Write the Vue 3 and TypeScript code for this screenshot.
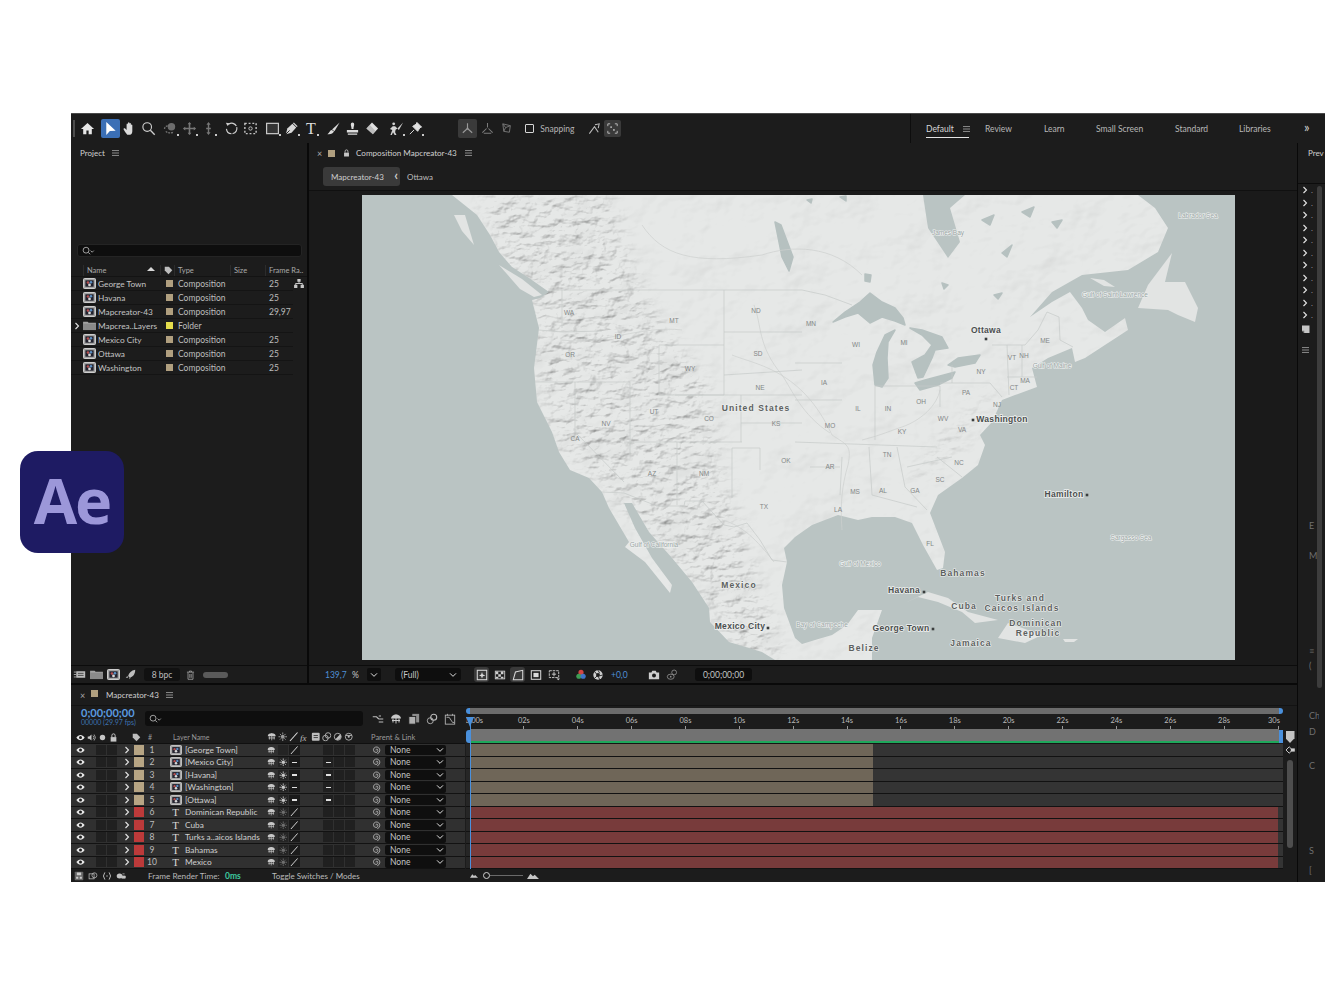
<script setup lang="ts">
interface Tool { icon: string; tri?: boolean; dim?: boolean; on?: boolean; sel?: boolean }
const toolGroups: Tool[][] = [
  [{ icon: 'home' }],
  [{ icon: 'arrow', sel: true }, { icon: 'hand' }, { icon: 'zoom' }],
  [{ icon: 'orbit', dim: true, tri: true }, { icon: 'pan', dim: true, tri: true }, { icon: 'dolly', dim: true, tri: true }],
  [{ icon: 'rotate' }, { icon: 'anchor' }],
  [{ icon: 'rect', tri: true }, { icon: 'pen', tri: true }, { icon: 'T', tri: true }],
  [{ icon: 'brush' }, { icon: 'stamp' }, { icon: 'eraser' }],
  [{ icon: 'roto', tri: true }, { icon: 'pin', tri: true }],
]
const workspaces = ['Review', 'Learn', 'Small Screen', 'Standard', 'Libraries']
const projectRows = [
  { name: 'George Town', type: 'Composition', fps: '25', tree: true },
  { name: 'Havana', type: 'Composition', fps: '25' },
  { name: 'Mapcreator-43', type: 'Composition', fps: '29,97' },
  { name: 'Mapcrea..Layers', type: 'Folder', fps: '', folder: true },
  { name: 'Mexico City', type: 'Composition', fps: '25' },
  { name: 'Ottawa', type: 'Composition', fps: '25' },
  { name: 'Washington', type: 'Composition', fps: '25' },
]
const layers = [
  { n: 1, name: '[George Town]', kind: 'comp', first: true },
  { n: 2, name: '[Mexico City]', kind: 'comp' },
  { n: 3, name: '[Havana]', kind: 'comp' },
  { n: 4, name: '[Washington]', kind: 'comp' },
  { n: 5, name: '[Ottawa]', kind: 'comp' },
  { n: 6, name: 'Dominican Republic', kind: 'text' },
  { n: 7, name: 'Cuba', kind: 'text' },
  { n: 8, name: 'Turks a..aicos Islands', kind: 'text' },
  { n: 9, name: 'Bahamas', kind: 'text' },
  { n: 10, name: 'Mexico', kind: 'text' },
]
const ticks = ['0:00s', '02s', '04s', '06s', '08s', '10s', '12s', '14s', '16s', '18s', '20s', '22s', '24s', '26s', '28s', '30s']
const headSwitches = ['shy', 'sun', 'slash', 'fx', 'mb', 'blend', 'half', 'cube']
const stripLetters = [
  { t: 'E', gap: 168 }, { t: 'M', gap: 21 }, { t: '≡', gap: 86 }, { t: '(', gap: 6 },
  { t: 'Ch', gap: 41 }, { t: 'D', gap: 7 }, { t: 'C', gap: 25 }, { t: 'S', gap: 76 }, { t: '[', gap: 10 },
]

const land = 'M90 0L115 20L128 40L137 57L150 72L167 83L187 97L178 103L170 105L177 133L172 173L175 207L190 237L197 257L208 275L227 283L240 297L247 313L267 347L263 352L283 367L308 398L310 390L290 363L273 333L262 308L270 308L287 337L310 363L330 387L347 413L348 427L367 447L400 457L413 465L510 465L510 443L520 415L496 415L485 430L470 440L453 445L440 449L433 443L422 413L420 390L425 367L422 353L433 342L450 330L476 320L496 325L510 322L533 322L550 328L561 350L575 375L581 373L583 357L568 318L576 300L600 283L616 270L623 250L618 240L630 227L640 205L653 200L675 192L670 173L686 163L710 153L713 167L723 163L766 135L763 123L743 137L726 125L720 113L708 97L690 107L668 122L690 97L720 80L766 75L796 57L806 33L793 13L776 0Z'
const islands = [
  '810 58 786 90 776 113 806 115 816 120 833 127 836 113 823 87 803 87',
  '543 408 566 397 586 403 606 417 636 425 613 428 600 417 576 407 556 402',
  '636 443 646 428 680 440 663 448',
  '701 444 716 444 712 447 703 447',
  '728 83 742 85 753 92 742 91',
  '137 70 160 84 180 100 172 102 158 94',
  '92 20 103 20 112 50 100 36',
  '600 445 612 446 606 449',
]
const lakes = [
  '471 127 483 117 498 107 508 98 520 107 533 113 541 123 543 130 533 126 520 122 508 128 496 118 483 122',
  '511 170 515 157 523 140 533 135 526 147 525 163 526 183 520 192 513 190',
  '548 133 560 135 580 142 586 153 573 155 570 163 561 182 556 183 550 167 563 160 570 150 560 140',
  '553 188 563 185 593 177 590 183 576 190 558 195',
  '586 170 596 163 618 160 613 168 593 172',
  '413 27 419 30 431 62 427 76 420 62',
  '503 79 509 80 508 87 503 86',
  '445 5 450 4 449 8', '478 2 484 1 484 6', '660 17 672 12 668 22', '690 27 700 25 695 33',
  '620 25 632 20 628 30', '640 58 650 50 645 62', '580 88 586 90 582 94', '632 100 640 98 636 104',
]
const borders = [
  'M187 95L440 95L463 100L490 110',
  'M630 150L663 150L676 135L685 117L697 122L698 145L711 152',
  'M200 95L200 133M177 135L200 137L240 136',
  'M173 187L268 187L268 260M213 187L213 237L262 287',
  'M262 247L380 247M315 247L315 310',
  'M370 253L370 303M370 253L398 253L398 275',
  'M240 297L262 298L295 311L322 311L323 306L340 306L362 330L372 332L385 328L398 345L410 365L425 367',
  'M297 150L362 150L362 200L297 200L297 150M313 200L379 200L379 247',
  'M362 95L362 150M362 137L440 137M362 180L440 175M379 200L440 200M379 228L440 228',
  'M433 168L480 168M433 205L480 205M433 247L575 252M513 191L513 245M513 191L578 191L578 212M578 188L628 188M590 188L590 170',
  'M507 252L510 300M480 262L478 300M448 272L478 272M535 252L543 292L565 315M510 300L555 312M575 262L600 282M545 272L590 262',
  'M645 150L647 200M660 150L660 182M645 182L675 182M628 188L640 202',
]
const rivers = [
  'M470 240C485 250 490 250 486 270C480 290 478 310 480 335',
  'M500 245C520 240 530 235 540 232C560 225 575 210 578 195',
  'M370 160C395 170 440 175 470 240',
  'M392 110C400 130 395 150 420 180C430 195 440 220 468 238',
  'M280 30C300 60 330 70 400 60C430 50 470 50 500 80',
  'M360 325C380 330 395 345 412 367',
  'M200 145C240 150 280 130 320 135',
]
const labels = [
  ['WA', 207, 118], ['MT', 312, 126], ['ID', 256, 142], ['OR', 208, 160], ['WY', 328, 174], ['ND', 394, 116],
  ['SD', 396, 159], ['NE', 398, 193], ['UT', 292, 217], ['NV', 244, 229], ['CO', 347, 224], ['KS', 414, 229],
  ['CA', 213, 244], ['OK', 424, 266], ['AZ', 290, 279], ['NM', 342, 279], ['TX', 402, 312], ['MN', 449, 129],
  ['WI', 494, 150], ['MI', 542, 148], ['IA', 462, 188], ['IL', 496, 214], ['IN', 526, 214], ['OH', 559, 207],
  ['MO', 468, 231], ['KY', 540, 237], ['WV', 581, 224], ['VA', 600, 235], ['TN', 525, 260], ['NC', 597, 268],
  ['AR', 468, 272], ['SC', 578, 285], ['GA', 553, 296], ['MS', 493, 297], ['AL', 521, 296], ['LA', 476, 315],
  ['FL', 568, 349], ['NY', 619, 177], ['PA', 604, 198], ['NJ', 635, 210], ['CT', 652, 193], ['MA', 663, 186],
  ['VT', 650, 163], ['NH', 662, 161], ['ME', 683, 146],
]
const waters = [
  ['James Bay', 586, 38], ['Labrador Sea', 836, 21], ['Gulf of Saint Lawrence', 753, 100], ['Gulf of Maine', 690, 171],
  ['Gulf of Mexico', 498, 369], ['Bay of Campeche', 460, 430], ['Sargasso Sea', 769, 343], ['Gulf of California', 292, 350],
]
const places = [
  ['United States', 394, 214, 'country'], ['Mexico', 377, 391, 'country'], ['Bahamas', 601, 379, 'country'], ['Cuba', 602, 412, 'country'],
  ['Turks and', 658, 404, 'country'], ['Caicos Islands', 660, 414, 'country'], ['Dominican', 674, 429, 'country'], ['Republic', 676, 439, 'country'],
  ['Jamaica', 609, 449, 'country'], ['Belize', 502, 454, 'country'],
  ['Ottawa', 624, 136, 'city'], ['Washington', 640, 225, 'city'], ['Hamilton', 702, 300, 'city'], ['Havana', 542, 396, 'city'],
  ['George Town', 539, 434, 'city'], ['Mexico City', 378, 432, 'city'],
]
const dots = [[624, 144], [611, 225], [725, 300], [562, 397], [571, 434], [406, 433]]
</script>

<template>
  <div class="page">
    <svg class="defs" width="0" height="0" aria-hidden="true">
      <symbol id="home" viewBox="0 0 16 16"><path d="M8 2L1 8.4h2.4V14h3.4v-4h2.4v4h3.4V8.4H15z" fill="#e6e6e6"/></symbol>
      <symbol id="arrow" viewBox="0 0 16 16"><path d="M3.5 1v14l3.8-4.3 6.2-.4z" fill="#fff"/></symbol>
      <symbol id="hand" viewBox="0 0 16 16"><path d="M5.6 14.6C4.4 13 2.6 10.6 1.8 9c-.5-1 .8-1.8 1.6-.9l1.5 1.6V3.6c0-1.1 1.5-1.1 1.5 0V7.4V2.2c0-1.1 1.6-1.1 1.6 0v5.2V3c0-1.1 1.5-1.1 1.5 0v4.6V4.4c0-1 1.5-1 1.5 0v6.4c0 2-1 3.8-2.6 3.8z" fill="#dcdcdc"/></symbol>
      <symbol id="zoom" viewBox="0 0 16 16"><circle cx="6.6" cy="6.4" r="4.6" fill="none" stroke="#cfcfcf" stroke-width="1.2"/><path d="M10 9.8l4.6 4.8" stroke="#cfcfcf" stroke-width="1.4"/></symbol>
      <symbol id="orbit" viewBox="0 0 16 16"><circle cx="9" cy="6" r="4" fill="#6d6d6d"/><path d="M1.5 8.5C2 5.5 5 5 7 5M3 11c2 2 6 2.500 8.500.5" fill="none" stroke="#777" stroke-width="1.3" stroke-dasharray="2 1"/></symbol>
      <symbol id="pan" viewBox="0 0 16 16"><path d="M8 2v12M2 8h12" stroke="#777" stroke-width="1.700"/><path d="M8 1L6 3.500h4zM8 15l-2-2.500h4zM1 8l2.500-2v4zM15 8l-2.500-2v4z" fill="#777"/></symbol>
      <symbol id="dolly" viewBox="0 0 16 16"><path d="M8 2.500v11M5.500 8h5" stroke="#777" stroke-width="1.500"/><path d="M8 1L5.800 4h4.400zM8 15l-2.200-3h4.400z" fill="#777"/></symbol>
      <symbol id="rotate" viewBox="0 0 16 16"><path d="M5.200 3.200A5.600 5.600 0 1 1 2.600 8.400" fill="none" stroke="#cfcfcf" stroke-width="1.200" stroke-dasharray="9 1.200"/><path d="M2 1.800l4.500.6-2.700 3z" fill="#cfcfcf"/></symbol>
      <symbol id="anchor" viewBox="0 0 16 16"><rect x="2" y="2.500" width="12" height="11" fill="none" stroke="#c4c4c4" stroke-width="1.500" stroke-dasharray="2 2"/><circle cx="8" cy="8" r="1.800" fill="none" stroke="#c4c4c4"/></symbol>
      <symbol id="rect" viewBox="0 0 16 16"><rect x="1.700" y="2.500" width="12.600" height="11" fill="#343434" stroke="#c9c9c9" stroke-width="1.300"/></symbol>
      <symbol id="pen" viewBox="0 0 16 16"><path d="M2 14l1.500-6L9 3l4 4-5 5.500z" fill="#d8d8d8"/><path d="M2 14l4-4" stroke="#1c1c1c"/><path d="M10 2l4 4" stroke="#d8d8d8" stroke-width="1.500"/></symbol>
      <symbol id="brush" viewBox="0 0 16 16"><path d="M14.500 1.500L6.500 9 9 11z" fill="#dcdcdc"/><path d="M6 9.600c-2 .4-2.200 2.800-4.500 4.400 3 .6 6.200-.5 7-3z" fill="#dcdcdc"/></symbol>
      <symbol id="stamp" viewBox="0 0 16 16"><path d="M6.200 3.500a1.800 1.800 0 1 1 3.600 0c0 2-.8 3-.8 5H7c0-2-.8-3-.8-5zM2 9.500h12v2.700H2zM3 13.400h10v1.200H3z" fill="#dcdcdc"/></symbol>
      <symbol id="eraser" viewBox="0 0 16 16"><path d="M8.500 1.500L15 8l-5.500 6-7-6z" fill="#e0e0e0"/><path d="M2.500 8l3.500-4L12 10.500 9.500 14z" fill="#9a9a9a" opacity=".5"/></symbol>
      <symbol id="roto" viewBox="0 0 16 16"><circle cx="5" cy="3" r="1.500" fill="#d4d4d4"/><path d="M4 5.500h2.500L9 8 7 9.200l-.5 2.800L8 15H6l-1.700-3L3 15H1.500L3.500 9.500 1 8.500z" fill="#d4d4d4"/><path d="M15 1.500L9 8l1.500 1.500z" fill="#d4d4d4"/></symbol>
      <symbol id="pin" viewBox="0 0 16 16"><path d="M9.500 1.500L14.500 6.500 12.700 7.200 10.300 11 5 5.700 8.800 3.300zM6.500 9.500L2 14" fill="#e0e0e0" stroke="#e0e0e0"/></symbol>
      <symbol id="axis" viewBox="0 0 16 16"><path d="M8 2.500V8L3 12.500M8 8l5 4.500" fill="none" stroke="#9a9a9a" stroke-width="1.200"/><circle cx="8" cy="8" r="1" fill="#9a9a9a"/></symbol>
      <symbol id="axis2" viewBox="0 0 16 16"><path d="M8 2v5M7 8l-4.500 4.500M9 8l4.500 4.500M4 13h8" fill="none" stroke="#7c7c7c" stroke-width="1.100"/></symbol>
      <symbol id="axis3" viewBox="0 0 16 16"><path d="M3 3l8 2-1 7-6-1zM3 3l3 4 5-2M6 7l-2 4" fill="none" stroke="#767676"/></symbol>
      <symbol id="snapA" viewBox="0 0 16 16"><path d="M2.500 13.500L8 6l4 6M8.500 4l4.500-1-1 4.500" fill="none" stroke="#bdbdbd" stroke-width="1.100"/></symbol>
      <symbol id="snapB" viewBox="0 0 16 16"><path d="M3 5.500V3h2.500M10.500 3H13v2.500M13 10.500V13h-2.500M5.500 13H3v-2.500" fill="none" stroke="#bdbdbd"/><circle cx="6.500" cy="6.500" r="1" fill="#bdbdbd"/><circle cx="9.500" cy="9.500" r="1" fill="#bdbdbd"/></symbol>
      <symbol id="menu" viewBox="0 0 10 8"><path d="M0 .5h10M0 4h10M0 7.500h10" stroke="#bababa"/></symbol>
      <symbol id="comp" viewBox="0 0 14 12"><rect x=".5" y=".5" width="13" height="11" rx="1" fill="#a4a4a4" stroke="#dcdcdc"/><rect x="2.500" y="2.500" width="9" height="7" fill="#22222e"/><circle cx="5.300" cy="5" r="1.400" fill="#b85050"/><circle cx="8.600" cy="4.700" r="1.400" fill="#5a8fc4"/><circle cx="7" cy="7.500" r="1.500" fill="#d8d8d8"/></symbol>
      <symbol id="folder" viewBox="0 0 14 12"><path d="M0 2h5l1 1h8v8H0z" fill="#a3a3a3"/><path d="M0 4h14v7H0z" fill="#8a8a8a"/></symbol>
      <symbol id="chev" viewBox="0 0 8 10"><path d="M2 1l4 4-4 4" fill="none" stroke="#e4e4e4" stroke-width="1.500"/></symbol>
      <symbol id="down" viewBox="0 0 10 8"><path d="M1 1.800l4 4 4-4" fill="none" stroke="#e4e4e4" stroke-width="1.300"/></symbol>
      <symbol id="search" viewBox="0 0 16 12"><circle cx="5" cy="5" r="3.600" fill="none" stroke="#bdbdbd"/><path d="M7.700 7.700L10 10" stroke="#bdbdbd" stroke-width="1.100"/><path d="M10.500 5.500l2 2 2-2" fill="none" stroke="#bdbdbd"/></symbol>
      <symbol id="tag" viewBox="0 0 12 12"><path d="M1 1h5.500L11 5.500 6 11 1 6z" fill="#bdbdbd"/></symbol>
      <symbol id="tree" viewBox="0 0 12 11"><path d="M4 0h4v3.500H4zM0 7h4v4H0zM8 7h4v4H8zM5.500 3.500h1V5H10.500v2h-1V6H2.500v1h-1V5h4z" fill="#c8c8c8"/></symbol>
      <symbol id="eye" viewBox="0 0 12 8"><path d="M.5 4C2 1.600 4 .5 6 .5S10 1.600 11.500 4C10 6.400 8 7.500 6 7.500S2 6.400.5 4z" fill="#e8e8e8"/><circle cx="6" cy="4" r="2" fill="#1c1c1c"/></symbol>
      <symbol id="audio" viewBox="0 0 12 10"><path d="M1 3.500h2L6 1v8L3 6.500H1z" fill="#c6c6c6"/><path d="M8 2.500a3.500 3.500 0 0 1 0 5M9.500 1a6 6 0 0 1 0 8" fill="none" stroke="#c6c6c6"/></symbol>
      <symbol id="solo" viewBox="0 0 10 10"><circle cx="5" cy="5" r="3" fill="#c6c6c6"/></symbol>
      <symbol id="lock" viewBox="0 0 10 11"><path d="M3 5V3a2 2 0 0 1 4 0v2" fill="none" stroke="#c6c6c6" stroke-width="1.200"/><rect x="1.500" y="5" width="7" height="5.500" fill="#c6c6c6"/></symbol>
      <symbol id="shy" viewBox="0 0 12 11"><path d="M1 5a5 4 0 0 1 10 0z" fill="#c8c8c8"/><path d="M6 1v9M3 5v4M9 5v4M2 7h8" stroke="#c8c8c8" fill="none"/></symbol>
      <symbol id="sun" viewBox="0 0 10 10"><circle cx="5" cy="5" r="2" fill="currentColor"/><path d="M5 .5v2M5 7.500v2M.5 5h2M7.500 5h2M2 2l1.300 1.300M6.700 6.700L8 8M8 2L6.700 3.300M3.300 6.700L2 8" stroke="currentColor"/></symbol>
      <symbol id="slash" viewBox="0 0 10 10"><path d="M1 9.500L9 .5" stroke="#e0e0e0" stroke-width="1.100"/></symbol>
      <symbol id="mb" viewBox="0 0 11 11"><rect x="1" y="1" width="9" height="9" rx="1" fill="#bdbdbd"/><rect x="3" y="3.500" width="5" height="1" fill="#333"/><rect x="3" y="6" width="5" height="1" fill="#333"/></symbol>
      <symbol id="blend" viewBox="0 0 11 11"><circle cx="4" cy="7" r="3.200" fill="none" stroke="#bdbdbd"/><circle cx="7" cy="4" r="3.200" fill="none" stroke="#bdbdbd"/></symbol>
      <symbol id="half" viewBox="0 0 11 11"><circle cx="5.500" cy="5.500" r="4" fill="none" stroke="#bdbdbd"/><path d="M8.300 2.700a4 4 0 0 1-5.600 5.600z" fill="#bdbdbd"/></symbol>
      <symbol id="cube" viewBox="0 0 11 11"><circle cx="5.500" cy="5.500" r="4" fill="none" stroke="#bdbdbd"/><circle cx="5.500" cy="5.500" r="1.300" fill="#bdbdbd"/><path d="M2 4h7" stroke="#bdbdbd"/></symbol>
      <symbol id="spiral" viewBox="0 0 12 12"><path d="M6 6.500a1.200 1.200 0 0 1 1.500-1.500A2.300 2.300 0 0 1 6 9 3.400 3.400 0 0 1 3 5a3.800 3.800 0 0 1 6-1.800 4 4 0 0 1 1.500 3.800 4.500 4.500 0 0 1-3 3.500" fill="none" stroke="#b9b9b9"/></symbol>
      <symbol id="tlTree" viewBox="0 0 16 12"><path d="M1 3h5l3 3M9 6h6M9 10h6M9 2h3" fill="none" stroke="#bdbdbd" stroke-width="1.500"/></symbol>
      <symbol id="stack" viewBox="0 0 14 14"><rect x="5" y="1" width="8" height="10" fill="#8d8d8d"/><rect x="1" y="4" width="8" height="9" fill="#b0b0b0" stroke="#1c1c1c"/></symbol>
      <symbol id="clip" viewBox="0 0 14 14"><circle cx="5" cy="9" r="3.500" fill="none" stroke="#b9b9b9"/><circle cx="9" cy="5" r="3.500" fill="none" stroke="#b9b9b9" stroke-width="1.300"/></symbol>
      <symbol id="graph" viewBox="0 0 14 14"><rect x="1.500" y="2.500" width="11" height="10.500" fill="none" stroke="#b9b9b9"/><path d="M3 5h3l4 6h2M4 1v2M10 1v2" fill="none" stroke="#b9b9b9"/></symbol>
      <symbol id="footage" viewBox="0 0 16 12"><rect x="4" y="2" width="11" height="8" fill="#bbb"/><path d="M1 3h3M1 6h3M1 9h3" stroke="#bbb"/><rect x="6" y="4" width="7" height="1" fill="#333"/><rect x="6" y="6.500" width="7" height="1" fill="#333"/></symbol>
      <symbol id="rocket" viewBox="0 0 14 14"><path d="M13 1C8 2 5 5 4 9l2 2c4-1 7-4 7-10zM3 9L1 11h3M6 11l-1 2 2.500-2" fill="#bdbdbd"/></symbol>
      <symbol id="trash" viewBox="0 0 12 14"><path d="M1 3h10M4.500 3V1.500h3V3M2.500 3.500V13h7V3.500M5 5.500v5.500M7 5.500v5.500" fill="none" stroke="#b5b5b5"/></symbol>
      <symbol id="vA" viewBox="0 0 14 14"><rect x="1.500" y="1.500" width="11" height="11" fill="none" stroke="#dadada" stroke-width="1.200"/><path d="M7 3.500L8 6.500 11 7.500 8 8.500 7 11 6 8.500 3.500 7.500 6 6.500z" fill="#dadada"/></symbol>
      <symbol id="vB" viewBox="0 0 14 14"><rect x="1.500" y="2.500" width="11" height="9" fill="none" stroke="#cfcfcf"/><path d="M2 3h3v3H2zM8 3h3v3H8zM5 6h3v3H5zM2 9h3v2H2zM8 9h3v2H8z" fill="#cfcfcf"/></symbol>
      <symbol id="vC" viewBox="0 0 14 14"><path d="M1.500 12.500L4 3.500 12.500 1.500v11z" fill="none" stroke="#dadada" stroke-width="1.200"/></symbol>
      <symbol id="vD" viewBox="0 0 14 14"><rect x="1.500" y="2" width="11" height="10" fill="none" stroke="#dadada" stroke-width="1.200"/><rect x="4" y="4.500" width="6" height="5" fill="#dadada"/></symbol>
      <symbol id="vE" viewBox="0 0 14 14"><rect x="1.500" y="2" width="11" height="8" fill="none" stroke="#dadada" stroke-dasharray="3 1"/><path d="M7 3.500v5M4.500 6h5" stroke="#dadada"/><path d="M10 11h4l-2 2z" fill="#dadada"/></symbol>
      <symbol id="rgb" viewBox="0 0 14 14"><circle cx="7" cy="4" r="3" fill="#d24545"/><circle cx="4.500" cy="8.500" r="3" fill="#3e9d54"/><circle cx="9.500" cy="8.500" r="3" fill="#3f74c9"/></symbol>
      <symbol id="expo" viewBox="0 0 14 14"><circle cx="7" cy="7" r="5.500" fill="#d0d0d0"/><circle cx="7" cy="7" r="2.300" fill="#1c1c1c"/><path d="M7 1.500L9 5M12.500 7L8.800 8M3 3L5.500 6M3 11l3-3M9 12.500L7.500 9" stroke="#1c1c1c"/></symbol>
      <symbol id="camera" viewBox="0 0 14 12"><path d="M1 3h3l1-2h4l1 2h3v8H1z" fill="#cfcfcf"/><circle cx="7" cy="6.500" r="2.300" fill="#1c1c1c"/></symbol>
      <symbol id="show" viewBox="0 0 14 14"><circle cx="9.500" cy="4" r="2.800" fill="none" stroke="#8e8e8e"/><ellipse cx="5.500" cy="9" rx="4" ry="3" fill="none" stroke="#8e8e8e"/><circle cx="5.500" cy="9" r="1" fill="#8e8e8e"/></symbol>
      <symbol id="tlA" viewBox="0 0 14 14"><rect x="1" y="1" width="12" height="12" rx="1" fill="#666"/><path d="M4 2h6v4H4zM3 8h3v3H3zM8 8h3v3H8z" fill="#ccc"/></symbol>
      <symbol id="tlB" viewBox="0 0 14 14"><rect x="1.500" y="4" width="7" height="7" fill="none" stroke="#c4c4c4"/><circle cx="9" cy="6" r="3.500" fill="none" stroke="#c4c4c4"/></symbol>
      <symbol id="tlC" viewBox="0 0 14 14"><path d="M4 2L2 7l2 5M10 2l2 5-2 5M6 7h2" fill="none" stroke="#c4c4c4" stroke-width="1.300"/></symbol>
      <symbol id="tlD" viewBox="0 0 14 14"><ellipse cx="5" cy="7" rx="4" ry="3.500" fill="#c4c4c4"/><path d="M8 7h5v3H8zM9 4h3" fill="#c4c4c4" stroke="#c4c4c4"/></symbol>
      <symbol id="mtn" viewBox="0 0 14 8"><path d="M0 8l4-6 3 3 2-2 5 5z" fill="#c6c6c6"/></symbol>
      <symbol id="navkey" viewBox="0 0 12 10"><path d="M1 5l4-4 3 3v2L5 9z" fill="none" stroke="#d0d0d0" stroke-width="1.200"/><rect x="7" y="3" width="5" height="4" fill="#d0d0d0"/></symbol>
      <symbol id="corner" viewBox="0 0 12 12"><path d="M0 2h10v10H3L0 9z" fill="#c6c6c6"/><path d="M0 9h3v3" fill="#6f6f6f"/></symbol>
    </svg>

    <div class="window">
      <header class="toolbar">
        <div class="grip"></div>
        <div v-for="(group, gi) in toolGroups" :key="gi" class="tool-group">
          <div v-for="tool in group" :key="tool.icon" class="tool" :class="{ sel: tool.sel, tri: tool.tri }">
            <span v-if="tool.icon === 'T'" class="tool-t">T</span>
            <svg v-else class="i14"><use :href="'#' + tool.icon" /></svg>
          </div>
        </div>
        <div class="axis-group">
          <div class="tool on"><svg class="i14"><use href="#axis" /></svg></div>
          <div class="tool"><svg class="i14"><use href="#axis2" /></svg></div>
          <div class="tool"><svg class="i14"><use href="#axis3" /></svg></div>
        </div>
        <div class="snap-check"></div>
        <span class="snap-label">Snapping</span>
        <div class="tool snap-a"><svg class="i14"><use href="#snapA" /></svg></div>
        <div class="tool on snap-b"><svg class="i14"><use href="#snapB" /></svg></div>
        <nav class="workspaces">
          <div class="ws-default">
            <span>Default</span>
            <svg class="menu-ic"><use href="#menu" /></svg>
          </div>
          <span v-for="w in workspaces" :key="w" class="ws">{{ w }}</span>
          <span class="ws-more">»</span>
        </nav>
      </header>

      <div class="body">
        <div class="main-col">
          <div class="top-row">
            <section class="project">
              <div class="panel-head">
                <span class="tab-title">Project</span>
                <svg class="menu-ic"><use href="#menu" /></svg>
              </div>
              <div class="proj-search"><svg class="i-search"><use href="#search" /></svg></div>
              <div class="proj-cols">
                <span class="pc-name">Name</span>
                <span class="sort-tri"></span>
                <span class="pc-tag"><svg class="i9"><use href="#tag" /></svg></span>
                <span class="pc-type">Type</span>
                <span class="pc-size">Size</span>
                <span class="pc-fps">Frame Ra..</span>
              </div>
              <div v-for="r in projectRows" :key="r.name" class="proj-row">
                <span class="chev-cell"><svg v-if="r.folder" class="i-chev"><use href="#chev" /></svg></span>
                <svg class="i-comp"><use :href="r.folder ? '#folder' : '#comp'" /></svg>
                <span class="pr-name">{{ r.name }}</span>
                <span class="pr-sw" :class="{ yellow: r.folder }"></span>
                <span class="pr-type">{{ r.type }}</span>
                <span class="pr-fps">{{ r.fps }}</span>
                <svg v-if="r.tree" class="i-tree"><use href="#tree" /></svg>
              </div>
              <div class="grow"></div>
              <div class="proj-foot">
                <svg class="i-foot"><use href="#footage" /></svg>
                <svg class="i-foot"><use href="#folder" /></svg>
                <svg class="i-foot"><use href="#comp" /></svg>
                <svg class="i-foot"><use href="#rocket" /></svg>
                <span class="bpc">8 bpc</span>
                <svg class="i-trash"><use href="#trash" /></svg>
                <span class="pill"></span>
              </div>
            </section>

            <section class="comp">
              <div class="comp-head">
                <span class="close">×</span>
                <span class="swatch-tan"></span>
                <svg class="i-lock"><use href="#lock" /></svg>
                <span class="tab-title comp-title">Composition Mapcreator-43</span>
                <svg class="menu-ic"><use href="#menu" /></svg>
              </div>
              <div class="crumbs">
                <div class="crumb-btn">
                  <span>Mapcreator-43</span>
                  <span class="crumb-chev">‹</span>
                </div>
                <span class="crumb-next">Ottawa</span>
              </div>
              <div class="viewer">
                <svg class="map" viewBox="0 0 873 465" preserveAspectRatio="none">
                  <defs>
                    <clipPath id="landClip"><path :d="land" /></clipPath>
                    <filter id="reliefStrong" x="0" y="0" width="100%" height="100%">
                      <feTurbulence type="fractalNoise" baseFrequency="0.06 0.11" numOctaves="5" seed="11" />
                      <feDiffuseLighting surfaceScale="3.200" diffuseConstant="1.220" lighting-color="#ffffff">
                        <feDistantLight azimuth="225" elevation="55" />
                      </feDiffuseLighting>
                    </filter>
                    <filter id="reliefSoft" x="0" y="0" width="100%" height="100%">
                      <feTurbulence type="fractalNoise" baseFrequency="0.018 0.024" numOctaves="4" seed="4" />
                      <feDiffuseLighting surfaceScale="3" diffuseConstant="1.220" lighting-color="#ffffff">
                        <feDistantLight azimuth="225" elevation="55" />
                      </feDiffuseLighting>
                    </filter>
                    <filter id="soft"><feGaussianBlur stdDeviation="9" /></filter>
                    <mask id="mtnMask">
                      <path d="M120 0L250 0L272 80L300 130L345 190L360 280L400 400L420 460L380 460L340 400L280 330L240 290L190 240L175 170L170 100L135 60Z" fill="#ddd" filter="url(#soft)" />
                      <path d="M560 265L625 200L640 190L600 250L545 290Z" fill="#888" filter="url(#soft)" />
                    </mask>
                  </defs>
                  <rect width="873" height="465" fill="#bac4c3" />
                  <polygon v-for="p in islands" :key="p" :points="p" fill="#e2e4e3" class="round" />
                  <g clip-path="url(#landClip)">
                    <rect width="873" height="465" fill="#e6e8e7" />
                    <rect width="873" height="465" filter="url(#reliefSoft)" class="multiply soft-layer" />
                    <rect width="873" height="465" filter="url(#reliefStrong)" mask="url(#mtnMask)" class="multiply" />
                  </g>
                  <polygon points="561 0 603 0 588 13 598 47 586 63 566 33" fill="#bac4c3" />
                  <polygon v-for="p in lakes" :key="p" :points="p" fill="#b6c1c0" stroke="#b6c1c0" class="round" />
                  <path v-for="r in rivers" :key="r" :d="r" fill="none" stroke="#cdd0cf" stroke-width=".7" />
                  <path v-for="b in borders" :key="b" :d="b" fill="none" stroke="#c6cac9" stroke-width=".7" />
                  <text v-for="l in labels" :key="String(l[0])" :x="l[1]" :y="l[2]" class="t-state">{{ l[0] }}</text>
                  <text v-for="w in waters" :key="String(w[0])" :x="w[1]" :y="w[2]" class="t-water">{{ w[0] }}</text>
                  <text v-for="p in places" :key="String(p[0])" :x="p[1]" :y="p[2]" :class="p[3] === 'city' ? 't-city' : 't-country'">{{ p[0] }}</text>
                  <rect v-for="d in dots" :key="d[0]" :x="d[0] - 1.300" :y="d[1] - 1.300" width="2.600" height="2.600" fill="#3a3d3d" />
                </svg>
              </div>
              <div class="comp-foot">
                <span class="blue mag">139,7</span>
                <span class="pct">%</span>
                <span class="mini-drop"><svg class="i-down"><use href="#down" /></svg></span>
                <span class="res-drop"><span>(Full)</span><svg class="i-down"><use href="#down" /></svg></span>
                <span class="v-btn on first"><svg class="i12"><use href="#vA" /></svg></span>
                <span class="v-btn"><svg class="i12"><use href="#vB" /></svg></span>
                <span class="v-btn on"><svg class="i12"><use href="#vC" /></svg></span>
                <span class="v-btn"><svg class="i12"><use href="#vD" /></svg></span>
                <span class="v-btn"><svg class="i12"><use href="#vE" /></svg></span>
                <svg class="i12 rgb"><use href="#rgb" /></svg>
                <svg class="i12 expo"><use href="#expo" /></svg>
                <span class="blue expo-val">+0,0</span>
                <svg class="i12 cam"><use href="#camera" /></svg>
                <svg class="i12 showic"><use href="#show" /></svg>
                <span class="tc-box">0;00;00;00</span>
              </div>
            </section>
          </div>

          <section class="timeline">
            <div class="tl-head">
              <span class="close">×</span>
              <span class="swatch-tan"></span>
              <span class="tab-title">Mapcreator-43</span>
              <svg class="menu-ic"><use href="#menu" /></svg>
            </div>
            <div class="tl-body">
              <div class="tl-left">
                <div class="tl-tools">
                  <div class="tc">
                    <div class="tc-main">0;00;00;00</div>
                    <div class="tc-sub">00000 (29.97 fps)</div>
                  </div>
                  <div class="tl-search"><svg class="i-search"><use href="#search" /></svg></div>
                  <div class="tl-icons">
                    <svg class="i12"><use href="#tlTree" /></svg>
                    <svg class="i12"><use href="#shy" /></svg>
                    <svg class="i12"><use href="#stack" /></svg>
                    <svg class="i12"><use href="#clip" /></svg>
                    <svg class="i12"><use href="#graph" /></svg>
                  </div>
                </div>
                <div class="layer-grid cols-head">
                  <div class="head-vis">
                    <svg class="i9"><use href="#eye" /></svg>
                    <svg class="i9"><use href="#audio" /></svg>
                    <svg class="i9"><use href="#solo" /></svg>
                    <svg class="i9"><use href="#lock" /></svg>
                  </div>
                  <span></span>
                  <span class="head-tag"><svg class="i9"><use href="#tag" /></svg></span>
                  <span class="head-num">#</span>
                  <span class="head-name">Layer Name</span>
                  <div class="head-sw">
                    <svg v-for="s in headSwitches" :key="s" class="i-sw dimc">
                      <use v-if="s !== 'fx'" :href="'#' + s" />
                      <text v-else x="0" y="9" class="fx">fx</text>
                    </svg>
                  </div>
                  <span class="head-parent">Parent &amp; Link</span>
                </div>
                <div v-for="l in layers" :key="l.n" class="layer-grid layer">
                  <svg class="i-eye"><use href="#eye" /></svg>
                  <div class="vis-boxes"><span class="box"></span><span class="box"></span></div>
                  <span class="chev-wrap"><svg class="i-chev"><use href="#chev" /></svg></span>
                  <span class="lab" :class="l.kind === 'text' ? 'red' : 'tan'"></span>
                  <span class="num">{{ l.n }}</span>
                  <span class="kind">
                    <svg v-if="l.kind === 'comp'" class="i-comp"><use href="#comp" /></svg>
                    <span v-else class="t-icon">T</span>
                  </span>
                  <span class="lname">{{ l.name }}</span>
                  <div class="sw">
                    <span class="sw-c"><svg class="i-sw"><use href="#shy" /></svg></span>
                    <span class="sw-c" :class="l.kind === 'text' ? 'sun-dim' : 'sun-on'">
                      <svg v-if="!l.first" class="i-sw"><use href="#sun" /></svg>
                    </span>
                    <span class="sw-c boxed">
                      <svg v-if="l.first || l.kind === 'text'" class="i-sw"><use href="#slash" /></svg>
                      <span v-else class="dash"></span>
                    </span>
                  </div>
                  <div class="sw2">
                    <span class="box"><span v-if="l.kind === 'comp' && !l.first" class="dash"></span></span>
                    <span class="box"></span>
                    <span class="box"></span>
                  </div>
                  <span class="par"><svg class="i-sw2"><use href="#spiral" /></svg></span>
                  <span class="none-drop"><span>None</span><svg class="i-down"><use href="#down" /></svg></span>
                </div>
                <div class="tl-foot">
                  <span class="foot-on"><svg class="i10"><use href="#tlA" /></svg></span>
                  <svg class="i10"><use href="#tlB" /></svg>
                  <svg class="i10"><use href="#tlC" /></svg>
                  <svg class="i10"><use href="#tlD" /></svg>
                  <span class="frt">Frame Render Time:</span>
                  <span class="zero">0ms</span>
                  <span class="toggle">Toggle Switches / Modes</span>
                </div>
              </div>

              <div class="tl-right">
                <div class="tl-tracks">
                  <div class="nav-bar"><span class="nav-l"></span><span class="nav-fill"></span><span class="nav-r"></span></div>
                  <div class="ruler">
                    <div v-for="t in ticks" :key="t" class="tick"><span>{{ t }}</span><i></i></div>
                  </div>
                  <div class="work"><span class="work-l"></span><span class="work-fill"></span><span class="work-r"></span></div>
                  <div v-for="l in layers" :key="'t' + l.n" class="track">
                    <span class="track-pad"></span>
                    <span class="bar" :class="l.kind === 'text' ? 'bar-red' : 'bar-tan'"></span>
                  </div>
                  <div class="zoomer">
                    <svg class="i-mtn small"><use href="#mtn" /></svg>
                    <span class="z-knob"></span>
                    <span class="z-line"></span>
                    <svg class="i-mtn"><use href="#mtn" /></svg>
                  </div>
                  <div class="playhead"><span class="ph-top"></span></div>
                </div>
                <div class="tl-scroll">
                  <span class="shield"></span>
                  <svg class="i-nav"><use href="#navkey" /></svg>
                  <span class="v-scroll"></span>
                </div>
              </div>
            </div>
          </section>
        </div>

        <aside class="strip">
          <div class="prev">Prev</div>
          <div class="strip-main">
            <div class="strip-left">
              <div class="strip-list">
                <div v-for="n in 11" :key="n" class="strip-row"><svg class="i-chev"><use href="#chev" /></svg><span class="tiny">.</span></div>
              </div>
              <svg class="i-corner"><use href="#corner" /></svg>
              <svg class="menu-ic strip-menu"><use href="#menu" /></svg>
              <span v-for="l in stripLetters" :key="l.t" class="strip-letter" :style="{ marginTop: l.gap + 'px' }">{{ l.t }}</span>
            </div>
            <div class="strip-bar"></div>
          </div>
        </aside>
      </div>
    </div>

    <div class="ae-logo">Ae</div>
  </div>
</template>

<style>
html, body { margin: 0; background: #fff; }
</style>

<style scoped>
.page { position: relative; width: 1342px; height: 1000px; background: #fff; padding: 113px 0 0 71px; box-sizing: border-box; overflow: hidden; font-family: Lato, "Liberation Sans", sans-serif; font-size: 8.5px; color: #c6c6c6; }
.defs { position: absolute; }
.window { width: 1254px; height: 769px; background: #090909; display: flex; flex-direction: column; border-top: 1px solid #4a4a4a; box-sizing: border-box; }
svg { display: block; flex: none; }
.i14 { width: 15px; height: 15px; }
.i12 { width: 12px; height: 12px; }
.i10 { width: 10px; height: 10px; }
.i9 { width: 9px; height: 9px; }
.grow { flex: 1; }
.blue { color: #4f8fd6; }
.round { stroke-linejoin: round; stroke-width: 1.500px; }

/* toolbar */
.toolbar { height: 29px; background: #1c1c1c; display: flex; align-items: center; flex: none; }
.grip { width: 2px; height: 17px; background: #4d4d4d; margin: 0 3px 0 2px; flex: none; }
.tool-group { display: flex; margin-right: 3.600px; }
.tool-group:nth-child(8) { margin-left: 2px; }
.tool { width: 19px; height: 19px; display: flex; align-items: center; justify-content: center; position: relative; border-radius: 2px; flex: none; }
.tool.sel { background: #3b6fb5; }
.tool.on { background: #3a3a3a; }
.tool.tri::after { content: ""; position: absolute; right: 1px; bottom: 2px; width: 2px; height: 2px; background: #c9c9c9; }
.tool-t { font-family: "Liberation Serif", serif; font-size: 16px; color: #dedede; line-height: 1; }
.axis-group { display: flex; margin-left: 30px; gap: 1px; }
.snap-check { width: 7px; height: 7px; border: 1.500px solid #d6d6d6; border-radius: 1px; margin-left: 8px; flex: none; }
.snap-label { margin-left: 6px; color: #b5b5b5; width: 36px; }
.snap-a { margin-left: 9px; }
.snap-b { margin-left: 0; width: 17px; height: 17px; }
.workspaces { margin-left: auto; width: 415px; height: 100%; border-left: 1px solid #0d0d0d; display: flex; align-items: center; box-sizing: border-box; padding-left: 15px; position: relative; flex: none; }
.ws-default { display: flex; align-items: center; gap: 9px; color: #d6d6d6; width: 43px; height: 100%; position: relative; flex: none; }
.ws-default::after { content: ""; position: absolute; left: 0; right: 0; bottom: 5px; height: 1px; background: #e4e4e4; }
.ws { position: absolute; color: #b8b8b8; }
.ws:nth-of-type(1) { left: 74px; }
.ws:nth-of-type(2) { left: 133px; }
.ws:nth-of-type(3) { left: 185px; }
.ws:nth-of-type(4) { left: 264px; }
.ws:nth-of-type(5) { left: 328px; }
.ws-more { position: absolute; left: 393px; font-size: 13px; color: #cfcfcf; line-height: 1; top: 7px; }
.menu-ic { width: 7px; height: 6px; }

/* layout */
.body { flex: 1; display: flex; min-height: 0; }
.main-col { width: 1226px; display: flex; flex-direction: column; gap: 2px; flex: none; margin-right: 1px; }
.top-row { height: 540px; display: flex; gap: 2px; flex: none; }
.panel-head { height: 22px; display: flex; align-items: center; padding: 0 0 3px 9px; gap: 7px; flex: none; box-sizing: border-box; }
.tab-title { color: #d0d0d0; font-size: 8px; }
.comp-title { font-size: 8.100px; }

/* project */
.project { width: 236px; background: #1c1c1c; display: flex; flex-direction: column; flex: none; }
.proj-search { height: 13px; margin: 79px 6px 0; background: #0e0e0e; border-radius: 3px; display: flex; align-items: center; padding-left: 4px; flex: none; border: 1px solid #242424; box-sizing: border-box; width: 225px; }
.i-search { width: 13px; height: 10px; }
.proj-cols { height: 12px; margin-top: 7px; position: relative; flex: none; font-size: 7.500px; color: #aaa; border-bottom: 1px solid #131313; }
.proj-cols > span { position: absolute; top: 1px; line-height: 11px; border-left: 1px solid #2c2c2c; padding-left: 3px; }
.pc-name { left: 12px; }
.pc-tag { left: 89px; }
.pc-tag svg { margin-top: 1px; }
.pc-type { left: 103px; }
.pc-size { left: 159px; }
.pc-fps { left: 194px; }
.proj-cols > .sort-tri { left: 76px; top: 3px; width: 0; height: 0; border: 4px solid transparent; border-top: 0; border-bottom: 4px solid #d8d8d8; padding: 0; }
.proj-row { height: 14px; display: flex; align-items: center; position: relative; flex: none; width: 222px; border-bottom: 1px solid #141414; box-sizing: border-box; }
.chev-cell { width: 12px; padding-left: 3px; box-sizing: border-box; flex: none; }
.i-chev { width: 6px; height: 8px; }
.i-comp { width: 13px; height: 11px; }
.pr-name { width: 64px; margin-left: 2px; flex: none; white-space: nowrap; color: #c4c4c4; font-size: 8.300px; }
.pr-sw { width: 7px; height: 7px; background: #b09f7f; margin-left: 4px; flex: none; }
.pr-sw.yellow { background: #e4dc4c; }
.pr-type { margin-left: 5px; width: 91px; flex: none; color: #bdbdbd; }
.pr-fps { color: #bdbdbd; }
.i-tree { position: absolute; left: 223px; width: 10px; height: 9px; }
.proj-foot { height: 18px; border-top: 1px solid #0c0c0c; display: flex; align-items: center; flex: none; padding-left: 2px; gap: 4px; box-sizing: border-box; }
.i-foot { width: 13px; height: 11px; }
.bpc { margin-left: 3px; width: 36px; height: 13px; border-radius: 3px; background: #111; display: flex; align-items: center; justify-content: center; color: #bdbdbd; flex: none; font-size: 8.500px; }
.i-trash { width: 9px; height: 10px; margin-left: 2px; }
.pill { width: 25px; height: 6px; border-radius: 3px; background: #5a5a5a; margin-left: 4px; }

/* comp */
.comp { width: 988px; background: #1c1c1c; display: flex; flex-direction: column; flex: none; }
.comp-head { height: 22px; display: flex; align-items: center; padding: 0 0 2px 8px; flex: none; box-sizing: border-box; }
.close { color: #aaa; font-size: 9px; width: 11px; flex: none; }
.swatch-tan { width: 7px; height: 7px; background: #b09f7f; flex: none; }
.i-lock { width: 7px; height: 8px; margin-left: 8px; }
.comp-head .tab-title { margin-left: 6px; }
.comp-head .menu-ic { margin-left: 8px; }
.crumbs { height: 25px; display: flex; align-items: flex-start; padding: 2px 0 0 14px; box-sizing: border-box; flex: none; }
.crumb-btn { width: 77px; height: 19px; background: #3a3a3a; border-radius: 3px; display: flex; align-items: center; padding-left: 8px; box-sizing: border-box; color: #cfcfcf; position: relative; font-size: 8px; }
.crumb-chev { position: absolute; right: 2px; font-size: 13px; line-height: 1; top: 2px; font-weight: 700; }
.crumb-next { margin: 5px 0 0 7px; color: #bdbdbd; font-size: 8px; }
.viewer { flex: 1; border-top: 1px solid #101010; padding: 4px 0 0 53px; box-sizing: border-box; min-height: 0; background: #1a1a1a; }
.map { width: 873px; height: 465px; }
.multiply { mix-blend-mode: multiply; }
.soft-layer { opacity: .45; }
.t-state { font: 400 6.500px "Liberation Sans", sans-serif; fill: #828686; text-anchor: middle; dominant-baseline: middle; }
.t-water { font: 400 6.500px "Liberation Sans", sans-serif; fill: #99a4a3; stroke: #eef1f0; stroke-width: 1.200px; paint-order: stroke; text-anchor: middle; dominant-baseline: middle; }
.t-city { font: 700 8.500px "Liberation Sans", sans-serif; fill: #4a4e4e; stroke: #eef0ef; stroke-width: 1.500px; paint-order: stroke; text-anchor: middle; dominant-baseline: middle; letter-spacing: .3px; }
.t-country { font: 700 8.500px "Liberation Sans", sans-serif; fill: #5c6060; stroke: #eef0ef; stroke-width: 1.200px; paint-order: stroke; text-anchor: middle; dominant-baseline: middle; letter-spacing: 1.100px; }
.comp-foot { height: 18px; border-top: 1px solid #0c0c0c; display: flex; align-items: center; box-sizing: border-box; flex: none; padding-left: 16px; position: relative; }
.mag { width: 27px; font-size: 8.500px; flex: none; }
.pct { width: 15px; flex: none; font-size: 8.500px; }
.mini-drop { width: 14px; height: 13px; background: #0e0e0e; border-radius: 2px; display: flex; align-items: center; justify-content: center; flex: none; }
.i-down { width: 8px; height: 6px; }
.res-drop { margin-left: 14px; width: 66px; height: 13px; background: #0e0e0e; border-radius: 3px; display: flex; align-items: center; justify-content: space-between; padding: 0 4px 0 6px; box-sizing: border-box; flex: none; }
.v-btn { width: 15px; height: 15px; margin-left: 3px; display: flex; align-items: center; justify-content: center; border-radius: 3px; flex: none; }
.v-btn.on { background: #3a3a3a; }
.v-btn.first { margin-left: 13px; }
.rgb { margin-left: 14px; }
.expo { margin-left: 5px; }
.expo-val { margin-left: 7px; width: 16px; flex: none; font-size: 8.500px; }
.cam { margin-left: 21px; }
.showic { margin-left: 6px; }
.tc-box { margin-left: 17px; width: 57px; height: 13px; background: #0e0e0e; border-radius: 3px; display: flex; align-items: center; justify-content: center; color: #c4c4c4; font-size: 8.500px; flex: none; }

/* timeline */
.timeline { flex: 1; background: #1c1c1c; display: flex; flex-direction: column; min-height: 0; }
.tl-head { height: 20px; display: flex; align-items: center; padding-left: 9px; flex: none; }
.tl-head .swatch-tan { margin-top: -3px; }
.tl-head .tab-title { margin-left: 8px; }
.tl-head .menu-ic { margin-left: 7px; }
.tl-body { flex: 1; display: flex; min-height: 0; border-top: 1px solid #131313; }
.tl-left { width: 394px; flex: none; display: flex; flex-direction: column; }
.tl-tools { height: 25px; display: flex; align-items: center; flex: none; }
.tc { width: 74px; padding-left: 10px; box-sizing: border-box; flex: none; margin-top: -3px; }
.tc-main { color: #5a9be0; font-size: 11px; font-weight: 700; line-height: 11px; }
.tc-sub { color: #3d72b0; font-size: 7px; line-height: 9px; }
.tl-search { width: 218px; height: 15px; background: #0e0e0e; border-radius: 3px; display: flex; align-items: center; padding-left: 4px; box-sizing: border-box; flex: none; }
.tl-icons { display: flex; gap: 6px; margin-left: 9px; }
.layer-grid { display: grid; grid-template-columns: 16px 30px 15px 14px 12px 26px 82px 34.500px 54.500px 27px 64px 19px; align-items: center; }
.cols-head { height: 13px; flex: none; color: #9a9a9a; font-size: 7px; border-bottom: 1px solid #101010; box-sizing: border-box; }
.head-vis { grid-column: 1 / span 2; display: flex; gap: 2.200px; padding-left: 4.500px; }
.head-tag { grid-column: 4; }
.head-num { text-align: left; padding-left: 2px; }
.head-name { grid-column: 6 / span 2; padding-left: 15px; }
.head-sw { grid-column: 8 / span 2; display: flex; gap: 1.500px; padding-left: 1px; }
.i-sw { width: 9.500px; height: 9.500px; }
.fx { font: italic 400 9px "Liberation Serif", serif; fill: #bdbdbd; }
.head-parent { grid-column: 10 / span 3; padding-left: 16px; font-size: 7.500px; }
.layer { height: 12.500px; flex: none; background: #303030; border-bottom: 1px solid #121212; box-sizing: border-box; }
.i-eye { width: 9px; height: 6px; margin-left: 4.500px; }
.vis-boxes { display: flex; gap: 1px; padding-left: 9px; }
.box { width: 10px; height: 10px; background: #202020; display: flex; align-items: center; justify-content: center; flex: none; }
.chev-wrap { display: flex; justify-content: flex-end; padding-right: 2px; }
.lab { width: 10px; height: 10px; margin-left: 2px; }
.lab.tan { background: #b7a584; }
.lab.red { background: #bc3a3a; }
.num { font-size: 8.500px; color: #bdbdbd; text-align: center; }
.kind { display: flex; justify-content: flex-end; padding-right: 2px; }
.kind .i-comp { width: 12px; height: 10px; }
.t-icon { font-family: "Liberation Serif", serif; font-size: 11px; color: #d8d8d8; line-height: 10px; padding-right: 3px; }
.lname { white-space: nowrap; color: #cfcfcf; font-size: 8.300px; padding-left: 1px; }
.sw { display: flex; gap: 1px; }
.sw-c { width: 10.500px; height: 10px; display: flex; align-items: center; justify-content: center; background: #242424; }
.sw-c:first-child { background: transparent; }
.sw-c .i-sw { width: 8.500px; height: 8.500px; }
.sun-on { color: #c8c8c8; }
.sun-dim { color: #6e6e6e; }
.boxed { background: #1b1b1b; }
.dash { width: 5px; height: 1.500px; background: #e0e0e0; }
.sw2 { display: flex; gap: 1px; justify-content: flex-end; }
.par { display: flex; justify-content: flex-end; padding-right: 1px; }
.i-sw2 { width: 10px; height: 10px; }
.none-drop { height: 10.500px; margin-left: 3px; background: #0f0f0f; border-radius: 2px; display: flex; align-items: center; justify-content: space-between; padding: 0 2px 0 5px; box-sizing: border-box; color: #c4c4c4; font-size: 8.500px; }
.tl-foot { flex: 1; display: flex; align-items: center; padding-left: 3px; gap: 4px; min-height: 0; }
.foot-on { display: flex; }
.frt { margin-left: 18px; width: 73px; flex: none; color: #b8b8b8; font-size: 8.200px; white-space: nowrap; }
.zero { color: #3ccaa0; font-weight: 700; width: 43px; flex: none; }
.toggle { color: #bdbdbd; white-space: nowrap; font-size: 8px; }
.tl-right { flex: 1; display: flex; min-width: 0; margin-left: 1px; }
.tl-tracks { width: 817px; flex: none; display: flex; flex-direction: column; position: relative; overflow: hidden; }
.nav-bar { height: 9px; padding-top: 2px; display: flex; box-sizing: border-box; flex: none; }
.nav-l, .nav-r { width: 4px; height: 6px; background: #4a90dc; border-radius: 3px 0 0 3px; flex: none; }
.nav-r { border-radius: 0 3px 3px 0; }
.nav-fill { flex: 1; height: 6px; background: #6c6c6c; }
.ruler { height: 14px; display: flex; margin-left: -22.900px; flex: none; overflow: hidden; }
.tick { width: 53.870px; flex: none; text-align: center; font-size: 7.500px; color: #bbb; line-height: 11px; position: relative; }
.tick:first-child span { position: relative; left: 4px; }
.tick:last-child span { position: relative; left: -4px; }
.tick i { position: absolute; left: 26.500px; bottom: 0; width: 1px; height: 3px; background: #999; }
.work { height: 15px; display: flex; flex: none; }
.work-l, .work-r { width: 4px; height: 13px; background: #4a90dc; border-radius: 3px 0 0 3px; flex: none; margin-top: 1px; }
.work-r { border-radius: 0; }
.work-fill { flex: 1; height: 15px; background: linear-gradient(#727272 0, #727272 12px, #1ea85b 12px, #1ea85b 14px, #151515 14px); }
.track { height: 12.500px; flex: none; display: flex; background: #343434; border-bottom: 1px solid #121212; box-sizing: border-box; }
.track-pad { width: 4.500px; flex: none; background: #262626; }
.bar { display: block; height: 100%; flex: none; }
.bar-tan { width: 402.500px; background: #6f6658; }
.bar-red { width: 807.500px; background: #783b3b; }
.zoomer { flex: 1; display: flex; align-items: center; padding-left: 3.500px; min-height: 0; }
.i-mtn { width: 12px; height: 7px; }
.i-mtn.small { width: 8px; height: 5px; }
.z-knob { width: 5px; height: 5px; border: 1.300px solid #d0d0d0; border-radius: 50%; margin-left: 5px; flex: none; }
.z-line { width: 33px; height: 1px; background: #6a6a6a; margin-right: 4px; flex: none; }
.playhead { position: absolute; left: 3.500px; top: 11px; bottom: 13px; width: 1px; background: #4a90dc; }
.ph-top { position: absolute; left: -4px; top: 0; width: 0; height: 0; border-left: 4.500px solid transparent; border-right: 4.500px solid transparent; border-top: 10px solid #4a90dc; }
.tl-scroll { flex: 1; display: flex; flex-direction: column; align-items: center; padding-top: 25px; }
.shield { width: 9px; height: 12px; background: #c4c4c4; clip-path: polygon(0 0, 100% 0, 100% 60%, 50% 100%, 0 60%); flex: none; }
.i-nav { width: 10px; height: 8px; margin-top: 3px; }
.v-scroll { width: 6px; height: 88px; background: #4e4e4e; border-radius: 3px; margin-top: 6px; flex: none; }

/* strip */
.strip { flex: 1; background: #1c1c1c; display: flex; flex-direction: column; min-width: 0; overflow: hidden; }
.prev { height: 41px; line-height: 21px; font-size: 8px; color: #cfcfcf; padding-left: 10px; white-space: nowrap; border-bottom: 1px solid #0c0c0c; flex: none; box-sizing: border-box; }
.strip-main { flex: 1; display: flex; min-height: 0; }
.strip-left { width: 17px; flex: none; display: flex; flex-direction: column; padding-left: 4px; overflow: hidden; }
.strip-list { flex: none; }
.strip-row { height: 12.500px; display: flex; align-items: center; gap: 3px; }
.tiny { font-size: 8px; color: #999; line-height: 1; }
.i-corner { width: 9px; height: 9px; margin-top: 2px; }
.strip-menu { margin-top: 14px; }
.strip-letter { color: #6f6f6f; font-size: 9px; line-height: 9px; padding-left: 7px; flex: none; }
.strip-bar { width: 5px; height: 502px; background: #3d3d3d; margin-top: 2px; margin-left: -2px; border-radius: 3px; flex: none; }

/* logo */
.ae-logo { position: absolute; left: 20px; top: 451px; width: 104px; height: 102px; border-radius: 18px; background: #1e1b63; color: #9c97d9; font-family: "Open Sans", sans-serif; font-weight: 700; font-size: 63px; line-height: 98px; text-align: center; letter-spacing: -2px; }
</style>
